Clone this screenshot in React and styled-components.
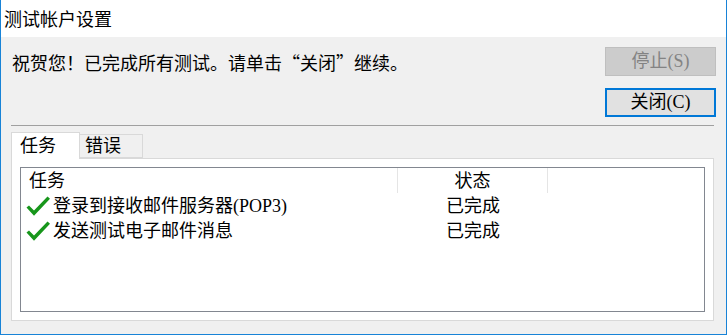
import React from "react";
import styled, { createGlobalStyle } from "styled-components";

const GlobalStyle = createGlobalStyle`
  html, body {
    margin: 0;
    padding: 0;
    background: #ffffff;
  }
  body {
    font-family: "Liberation Serif", "Noto Sans CJK SC", sans-serif;
    font-size: 18px;
    color: #000000;
  }
`;

const Window = styled.div`
  width: 727px;
  height: 335px;
  box-sizing: border-box;
  border: 1px solid #1883d7;
  border-top: none;
  display: flex;
  flex-direction: column;
  overflow: hidden;
`;

const TitleBar = styled.div`
  height: 37px;
  flex: none;
  background: #ffffff;
  padding-left: 3px;
  display: flex;
  align-items: center;
  font-family: "Noto Sans CJK SC", sans-serif;
  font-size: 18px;
  line-height: 37px;
`;

const Body = styled.div`
  flex: 1;
  background: #f0f0f0;
  padding: 10px 10px 13px 9px;
  display: flex;
  flex-direction: column;
  min-height: 0;
`;

const TopGrid = styled.div`
  display: grid;
  grid-template-columns: 1fr 111px;
  grid-template-rows: 29px 29px;
  row-gap: 12px;
  flex: none;
`;

const Message = styled.div`
  align-self: center;
  padding-left: 2px;
  padding-top: 3px;
  line-height: 24px;
  white-space: nowrap;
`;

const Quote = styled.span`
  font-family: "Noto Sans CJK SC", sans-serif;
  font-feature-settings: "fwid" 1;
`;

const Button = styled.button`
  box-sizing: border-box;
  width: 111px;
  height: 29px;
  margin: 0;
  padding: 0;
  font-family: "Liberation Serif", "Noto Sans CJK SC", sans-serif;
  font-size: 18px;
  line-height: 25px;
  background: ${p => (p.disabled ? "#cccccc" : "#e1e1e1")};
  color: ${p => (p.disabled ? "#838383" : "#000000")};
  border: ${p =>
    p.$focused ? "2px solid #0078d7" : p.disabled ? "1px solid #bfbfbf" : "1px solid #adadad"};
  grid-column: 2;
`;

const Separator = styled.div`
  flex: none;
  height: 1px;
  background: #a0a0a0;
  margin: 8px 2px 0 1px;
`;

const TabStrip = styled.div`
  display: flex;
  align-items: flex-end;
  margin: 6px 2px 0 1px;
  height: 26px;
  flex: none;
  position: relative;
  z-index: 1;
`;

const Tab = styled.div`
  box-sizing: border-box;
  width: ${p => (p.$active ? "69px" : "63px")};
  height: ${p => (p.$active ? "27px" : "24px")};
  margin-bottom: ${p => (p.$active ? "-1px" : "0")};
  padding-left: ${p => (p.$active ? "8px" : "5px")};
  background: ${p => (p.$active ? "#ffffff" : "#f0f0f0")};
  border: 1px solid #d9d9d9;
  border-bottom: ${p => (p.$active ? "none" : "1px solid #d9d9d9")};
  border-left: ${p => (p.$active ? "1px solid #d9d9d9" : "none")};
  display: flex;
  align-items: center;
  line-height: 22px;
`;

const Panel = styled.div`
  flex: 1;
  min-height: 0;
  box-sizing: border-box;
  margin: 0 2px 0 1px;
  background: #ffffff;
  border: 1px solid #d9d9d9;
  padding: 8px;
  display: flex;
  flex-direction: column;
`;

const ListView = styled.div`
  flex: 1;
  box-sizing: border-box;
  border: 1px solid #828790;
  background: #ffffff;
  display: grid;
  grid-template-columns: 377px 150px 1fr;
  grid-auto-rows: 25px;
  align-content: start;
`;

const HeaderCell = styled.div`
  box-sizing: border-box;
  height: 25px;
  display: flex;
  align-items: center;
  justify-content: ${p => (p.$center ? "center" : "flex-start")};
  padding-left: ${p => (p.$center ? "0" : "8px")};
  border-right: ${p => (p.$divider ? "1px solid #e5e5e5" : "none")};
  line-height: 24px;
`;

const Cell = styled.div`
  display: flex;
  align-items: center;
  justify-content: ${p => (p.$center ? "center" : "flex-start")};
  padding-left: ${p => (p.$center ? "0" : "5px")};
  gap: 3px;
  line-height: 24px;
  white-space: nowrap;
`;

const CheckIcon = styled.svg`
  width: 24px;
  height: 20px;
  flex: none;
`;

const Check = () => (
  <CheckIcon viewBox="0 0 24 20">
    <polygon
      points="0.5,11.5 3,9.5 8,14.5 21.5,0.5 24,2.8 8,19.8"
      fill="#17961b"
    />
  </CheckIcon>
);

const tasks = [
  { name: "登录到接收邮件服务器(POP3)", status: "已完成" },
  { name: "发送测试电子邮件消息", status: "已完成" },
];

export default function App() {
  return (
    <>
      <GlobalStyle />
      <Window>
        <TitleBar>测试帐户设置</TitleBar>
        <Body>
          <TopGrid>
            <Message>
              祝贺您！已完成所有测试。请单击<Quote>“</Quote>关闭<Quote>”</Quote>继续。
            </Message>
            <Button disabled>停止(S)</Button>
            <Button $focused style={{ gridRow: 2 }}>关闭(C)</Button>
          </TopGrid>
          <Separator />
          <TabStrip>
            <Tab $active>任务</Tab>
            <Tab>错误</Tab>
          </TabStrip>
          <Panel>
            <ListView>
              <HeaderCell $divider>任务</HeaderCell>
              <HeaderCell $divider $center>状态</HeaderCell>
              <HeaderCell />
              {tasks.map(t => (
                <React.Fragment key={t.name}>
                  <Cell>
                    <Check />
                    {t.name}
                  </Cell>
                  <Cell $center>{t.status}</Cell>
                  <Cell />
                </React.Fragment>
              ))}
            </ListView>
          </Panel>
        </Body>
      </Window>
    </>
  );
}
